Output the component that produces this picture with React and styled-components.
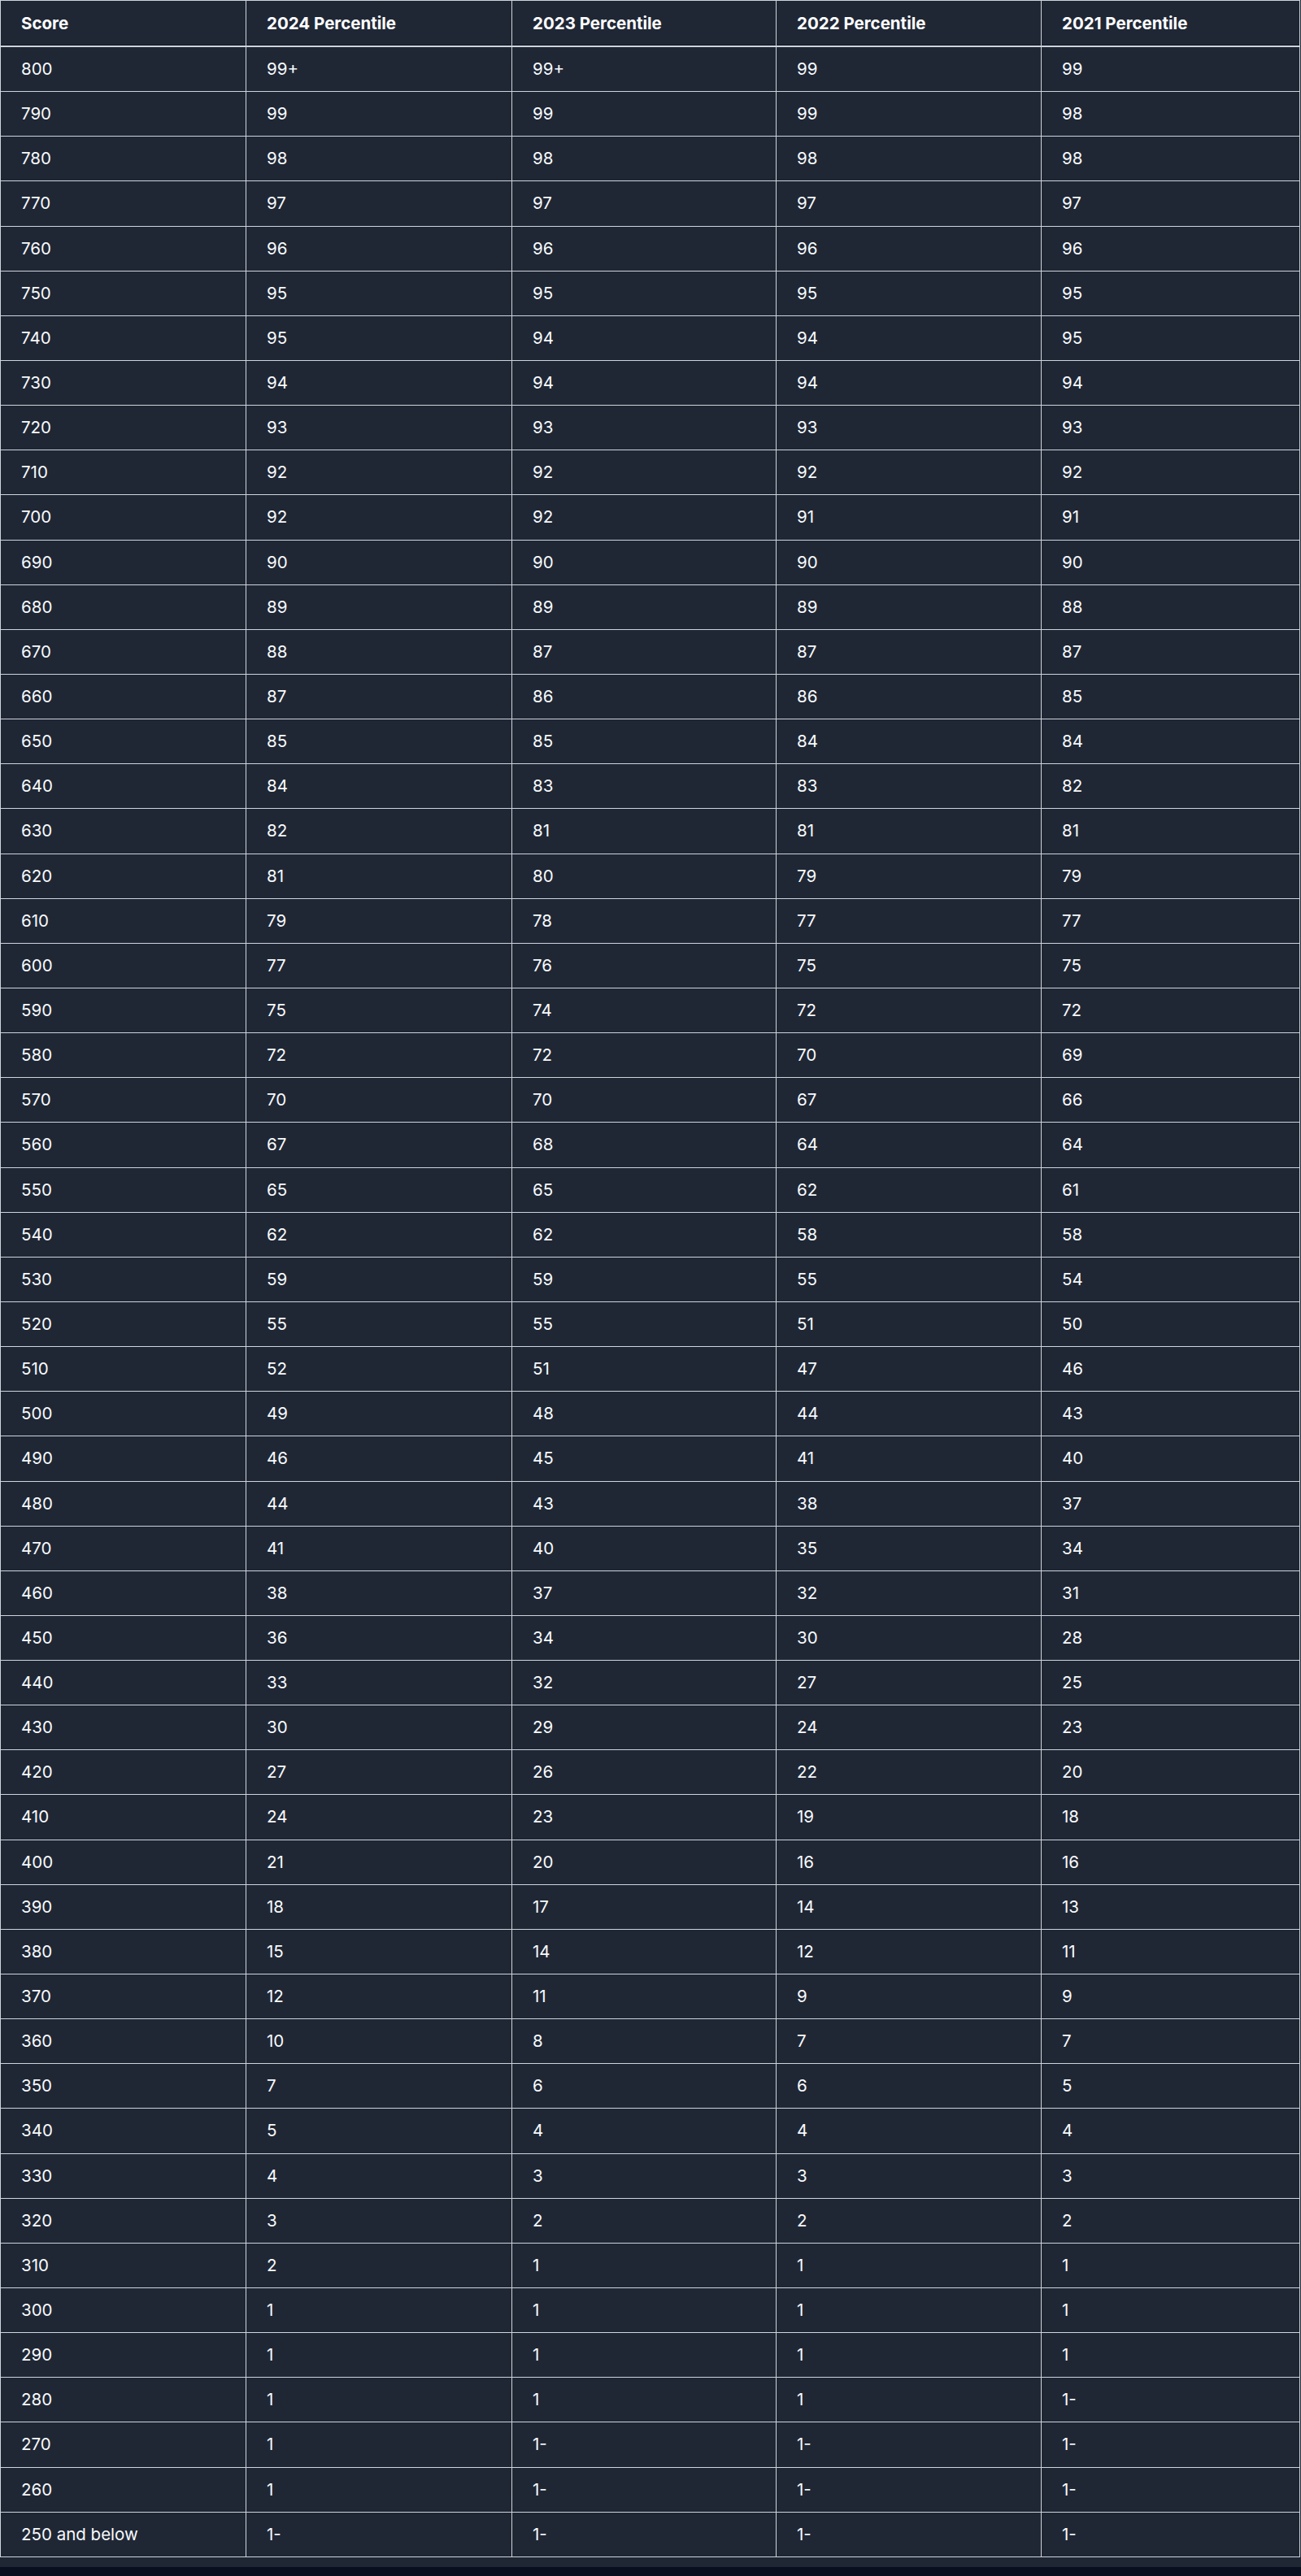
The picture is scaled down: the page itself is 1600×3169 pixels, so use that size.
import styled, { createGlobalStyle } from 'styled-components';

const GlobalStyle = createGlobalStyle`
  html, body {
    margin: 0;
    padding: 0;
    background-color: #080f1f;
  }
  body {
    font-family: Inter, "Noto Sans", "Liberation Sans", sans-serif;
    -webkit-font-smoothing: antialiased;
  }
`;

const rows = [
  ['800', '99+', '99+', '99', '99'],
  ['790', '99', '99', '99', '98'],
  ['780', '98', '98', '98', '98'],
  ['770', '97', '97', '97', '97'],
  ['760', '96', '96', '96', '96'],
  ['750', '95', '95', '95', '95'],
  ['740', '95', '94', '94', '95'],
  ['730', '94', '94', '94', '94'],
  ['720', '93', '93', '93', '93'],
  ['710', '92', '92', '92', '92'],
  ['700', '92', '92', '91', '91'],
  ['690', '90', '90', '90', '90'],
  ['680', '89', '89', '89', '88'],
  ['670', '88', '87', '87', '87'],
  ['660', '87', '86', '86', '85'],
  ['650', '85', '85', '84', '84'],
  ['640', '84', '83', '83', '82'],
  ['630', '82', '81', '81', '81'],
  ['620', '81', '80', '79', '79'],
  ['610', '79', '78', '77', '77'],
  ['600', '77', '76', '75', '75'],
  ['590', '75', '74', '72', '72'],
  ['580', '72', '72', '70', '69'],
  ['570', '70', '70', '67', '66'],
  ['560', '67', '68', '64', '64'],
  ['550', '65', '65', '62', '61'],
  ['540', '62', '62', '58', '58'],
  ['530', '59', '59', '55', '54'],
  ['520', '55', '55', '51', '50'],
  ['510', '52', '51', '47', '46'],
  ['500', '49', '48', '44', '43'],
  ['490', '46', '45', '41', '40'],
  ['480', '44', '43', '38', '37'],
  ['470', '41', '40', '35', '34'],
  ['460', '38', '37', '32', '31'],
  ['450', '36', '34', '30', '28'],
  ['440', '33', '32', '27', '25'],
  ['430', '30', '29', '24', '23'],
  ['420', '27', '26', '22', '20'],
  ['410', '24', '23', '19', '18'],
  ['400', '21', '20', '16', '16'],
  ['390', '18', '17', '14', '13'],
  ['380', '15', '14', '12', '11'],
  ['370', '12', '11', '9', '9'],
  ['360', '10', '8', '7', '7'],
  ['350', '7', '6', '6', '5'],
  ['340', '5', '4', '4', '4'],
  ['330', '4', '3', '3', '3'],
  ['320', '3', '2', '2', '2'],
  ['310', '2', '1', '1', '1'],
  ['300', '1', '1', '1', '1'],
  ['290', '1', '1', '1', '1'],
  ['280', '1', '1', '1', '1-'],
  ['270', '1', '1-', '1-', '1-'],
  ['260', '1', '1-', '1-', '1-'],
  ['250 and below', '1-', '1-', '1-', '1-'],
];

const headers = ['Score', '2024 Percentile', '2023 Percentile', '2022 Percentile', '2021 Percentile'];
const widths = [302, 327, 325, 326, 318];

function App() {
  return (
    <>
      <GlobalStyle />
      <Section>
        <Table>
          <colgroup>
            {widths.map((w, i) => (
              <col key={i} style={{ width: w }} />
            ))}
          </colgroup>
          <thead>
            <tr>
              {headers.map((h) => (
                <HeadCell key={h}>{h}</HeadCell>
              ))}
            </tr>
          </thead>
          <tbody>
            {rows.map((r) => (
              <tr key={r[0]}>
                {r.map((v, i) => (
                  <Cell key={i}>{v}</Cell>
                ))}
              </tr>
            ))}
          </tbody>
        </Table>
      </Section>
    </>
  );
}

const Section = styled.section`
  width: 1600px;
  background-color: #1f2735;
  padding-bottom: 12px;
`;

const Table = styled.table`
  width: 1598px;
  table-layout: fixed;
  border-collapse: collapse;
  background-color: #1f2735;
  color: #f8fafc;
  font-size: 20.5px;
`;

const HeadCell = styled.th`
  text-align: left;
  font-weight: 700;
  padding: 14px 24px 14px 25px;
  line-height: 27px;
  border: 1px solid #cfd4dc;
  border-bottom: 2px solid #cfd4dc;
  box-shadow: inset 0 -1px 0 #111827;
  color: #ffffff;
  font-size: 20.5px;
`;

const Cell = styled.td`
  padding: 14px 24px 14px 25px;
  line-height: 26.14px;
  border: 1px solid #cfd4dc;
  font-weight: 400;
  white-space: nowrap;
`;

export default App;
